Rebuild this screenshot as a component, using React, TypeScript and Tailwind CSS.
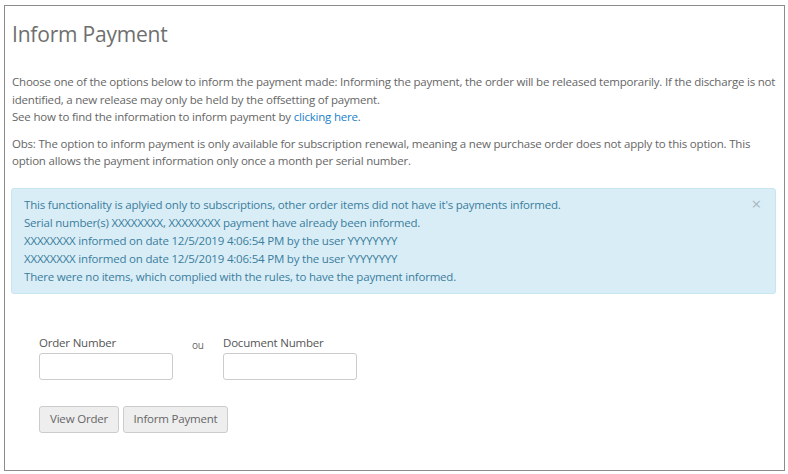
import React from 'react';

export default function App(): React.ReactElement {
  return (
    <div className="w-[788px] h-[474px] bg-white pt-[5px] pl-[4px] font-['Open_Sans',sans-serif]">
      <div className="w-[781px] h-[466px] border border-[#8c8c8c] px-[7px] pt-[13px]">
        <h1 className="text-[21px] leading-[30px] text-[#6f6f6f] font-normal tracking-[-0.2px]">Inform Payment</h1>

        <div className="mt-[24px] text-[11.5px] leading-[17.5px] text-[#666] tracking-[-0.2px]">
          <p>
            Choose one of the options below to inform the payment made: Informing the payment, the order will be
            released temporarily. If the discharge is not identified, a new release may only be held by the offsetting
            of payment.
            <br />
            See how to find the information to inform payment by{' '}
            <a href="#" className="text-[#1a7fc9]">
              clicking here
            </a>
            .
          </p>
          <p className="mt-[9px]">
            Obs: The option to inform payment is only available for subscription renewal, meaning a new purchase order
            does not apply to this option. This option allows the payment information only once a month per serial
            number.
          </p>
        </div>

        {/* Alert */}
        <div className="mt-[18px] ml-[-1px] mr-[1px] relative rounded-[3px] border border-[#c7e6f0] bg-[#d9edf7] px-[12px] py-[7px] text-[11.5px] leading-[18px] text-[#3a7d9c] tracking-[-0.2px]">
          <button type="button" className="absolute right-[14px] top-[5px] text-[17px] leading-[20px] text-[#a9b8bf]">
            ×
          </button>
          <div>This functionality is aplyied only to subscriptions, other order items did not have it's payments informed.</div>
          <div>Serial number(s) XXXXXXXX, XXXXXXXX payment have already been informed.</div>
          <div>XXXXXXXX informed on date 12/5/2019 4:06:54 PM by the user YYYYYYYY</div>
          <div>XXXXXXXX informed on date 12/5/2019 4:06:54 PM by the user YYYYYYYY</div>
          <div>There were no items, which complied with the rules, to have the payment informed.</div>
        </div>

        {/* Form */}
        <div className="mt-[41px] pl-[27px] text-[11.5px] text-[#555] tracking-[-0.2px]">
          <div className="flex items-start">
            <div className="flex flex-col">
              <label className="leading-[16px]">Order Number</label>
              <input className="mt-[2px] w-[134px] h-[27px] rounded-[3px] border border-[#ccc] bg-white" />
            </div>
            <span className="ml-[19px] mt-[2px] w-[31px] text-[10px] leading-[16px] text-[#666]">ou</span>
            <div className="flex flex-col">
              <label className="leading-[16px]">Document Number</label>
              <input className="mt-[2px] w-[134px] h-[27px] rounded-[3px] border border-[#ccc] bg-white" />
            </div>
          </div>
          <div className="mt-[26px] flex gap-[4px]">
            <button type="button" className="w-[80px] h-[27px] rounded-[3px] border border-[#ccc] bg-[#eee] text-[#666]">
              View Order
            </button>
            <button type="button" className="w-[105px] h-[27px] rounded-[3px] border border-[#ccc] bg-[#eee] text-[#666]">
              Inform Payment
            </button>
          </div>
        </div>
      </div>
    </div>
  );
}
